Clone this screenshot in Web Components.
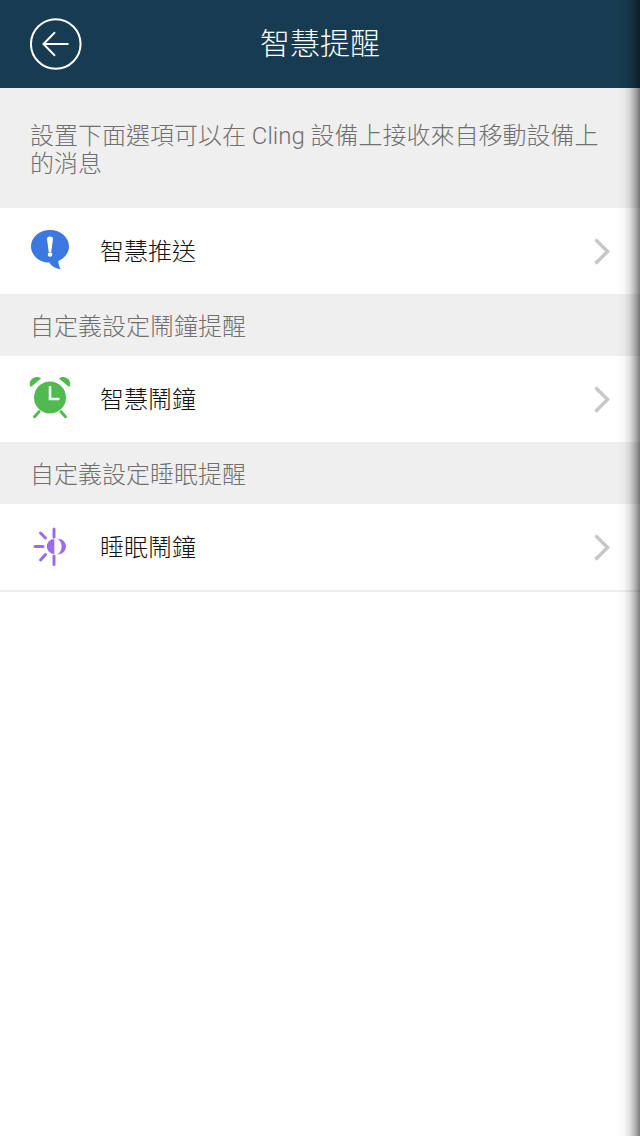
<!DOCTYPE html>
<html lang="zh-Hant">
<head>
<meta charset="utf-8">
<title>智慧提醒</title>
<style>
    html, body {
        margin: 0;
        padding: 0;
        height: 100%;
        background: #fff;
    }
    body {
        font-family: "Roboto", "Noto Sans CJK TC", sans-serif;
        font-weight: 300;
    }
</style>
</head>
<body>
<reminder-page>
    <app-header title-text="智慧提醒"></app-header>
    <info-note>設置下面選項可以在 Cling 設備上接收來自移動設備上的消息</info-note>
    <setting-row label="智慧推送">
        <svg slot="icon" width="40" height="42" viewBox="0 0 40 42">
            <path fill="#3b78e0" d="M20 0C30.500 0 39 7.300 39 16.300c0 6.500-4.400 12.100-10.700 14.700.2 3.300 1.100 6 2.500 8.300-4.600-.6-9-2.700-11.600-6.700C9.200 32.600 1 25.300 1 16.300 1 7.300 9.500 0 20 0z"/>
            <path fill="#fff" d="M17 8.800c0-1.400 1.300-2.300 3-2.300s3 .9 3 2.300L21.300 21.500c-.1.800-2.500.8-2.600 0z"/>
            <circle fill="#fff" cx="20" cy="24.500" r="2.300"/>
        </svg>
    </setting-row>
    <section-label>自定義設定鬧鐘提醒</section-label>
    <setting-row label="智慧鬧鐘">
        <svg slot="icon" width="42" height="42" viewBox="0 0 42 42">
            <circle fill="#50b94f" cx="21" cy="19.500" r="16"/>
            <path fill="#50b94f" d="M.8 7.500C0 3 3.500-1 8-1c1.500 0 3 .5 4 1.500L2.500 8.500c-.8.3-1.500 0-1.700-1zM41.200 7.500C42 3 38.500-1 34-1c-1.500 0-3 .5-4 1.500L39.500 8.500c.8.3 1.500 0 1.700-1z"/>
            <path fill="none" stroke="#50b94f" stroke-width="3" stroke-linecap="round" d="M10 33.700l-4.500 5M32 33.700l4.500 5"/>
            <path fill="none" stroke="#fff" stroke-width="2.600" d="M21 8V21H30.500"/>
        </svg>
    </setting-row>
    <section-label>自定義設定睡眠提醒</section-label>
    <setting-row label="睡眠鬧鐘" last>
        <svg slot="icon" width="42" height="42" viewBox="0 0 42 42">
            <path fill="none" stroke="#9a6bf0" stroke-width="3" stroke-linecap="round" d="M25 3v8M25 30v8.500M6 20.500h8M11.500 7l5 5M11.500 34l5-5.500"/>
            <path fill="#9a6bf0" d="M25.300 13v15a7.500 7.500 0 0 1 0-15z"/>
            <path fill="#9a6bf0" d="M28 12.500c5 0 9 3.600 9 8s-4 8-9 8c2.900-1.400 4.600-4.500 4.600-8s-1.700-6.600-4.600-8z"/>
        </svg>
    </setting-row>
</reminder-page>

<script>
class ReminderPage extends HTMLElement {
    constructor() {
        super();
        this.myRoot = this.attachShadow({ mode: "open" });
        this.myRoot.innerHTML = `
        <style>
            :host {
                display: block;
                position: relative;
                height: 1136px;
                overflow: hidden;
                background: #fff;
            }
            .edgeShadow {
                position: absolute;
                top: 0;
                right: 0;
                bottom: 0;
                width: 24px;
                background: linear-gradient(to right, rgba(0,0,0,0) 0%, rgba(0,0,0,.03) 35%, rgba(0,0,0,.12) 58%, rgba(0,0,0,.3) 80%, rgba(0,0,0,.52) 100%);
            }
        </style>
        <slot></slot>
        <div class="edgeShadow"></div>
        `;
    }
}

class AppHeader extends HTMLElement {
    constructor() {
        super();
        this.myRoot = this.attachShadow({ mode: "open" });
        this.myRoot.innerHTML = `
        <style>
            :host {
                display: flex;
                align-items: center;
                height: 88px;
                padding: 0 82px 0 30px;
                background: #173b50;
                color: #fff;
            }
            svg {
                flex: none;
                display: block;
            }
            h1 {
                margin: 0;
                flex: 1;
                text-align: center;
                font-size: 30px;
                line-height: 88px;
                font-weight: 300;
            }
        </style>
        <svg width="52" height="52" viewBox="0 0 52 52">
            <circle cx="25.750" cy="26" r="24.800" fill="none" stroke="#fff" stroke-width="2"/>
            <path d="M38.500 26H13.500M25 14.300 13.500 26 25 37.700" fill="none" stroke="#fff" stroke-width="2"/>
        </svg>
        <h1>${this.getAttribute("title-text")}</h1>
        `;
    }
}

class InfoNote extends HTMLElement {
    constructor() {
        super();
        this.myRoot = this.attachShadow({ mode: "open" });
        this.myRoot.innerHTML = `
        <style>
            :host {
                display: block;
                padding: 34px 30px 30px;
                background: #efefef;
                color: #707070;
                font-size: 24px;
                line-height: 28px;
            }
        </style>
        <slot></slot>
        `;
    }
}

class SectionLabel extends HTMLElement {
    constructor() {
        super();
        this.myRoot = this.attachShadow({ mode: "open" });
        this.myRoot.innerHTML = `
        <style>
            :host {
                display: block;
                height: 62px;
                padding-left: 30px;
                background: #efefef;
                color: #707070;
                font-size: 24px;
                line-height: 66px;
            }
        </style>
        <slot></slot>
        `;
    }
}

class SettingRow extends HTMLElement {
    constructor() {
        super();
        this.myRoot = this.attachShadow({ mode: "open" });
        this.myRoot.innerHTML = `
        <style>
            :host {
                display: flex;
                align-items: center;
                height: 86px;
                padding: 0 30px 0 29px;
                background: #fff;
                color: #111;
                font-size: 24px;
            }
            :host([last]) {
                border-bottom: 2px solid #eee;
            }
            .iconBox {
                flex: none;
                width: 42px;
                height: 42px;
                display: flex;
                align-items: center;
                justify-content: center;
                margin-right: 29px;
            }
            .label {
                flex: 1;
                padding-bottom: 3px;
            }
            svg {
                display: block;
            }
            ::slotted(svg) {
                overflow: visible;
            }
        </style>
        <div class="iconBox"><slot name="icon"></slot></div>
        <div class="label">${this.getAttribute("label")}</div>
        <svg width="17" height="27" viewBox="0 0 17 27">
            <path d="M2.500 1.500l12 12-12 12" fill="none" stroke="#c8c8cc" stroke-width="3.500"/>
        </svg>
        `;
    }
}

window.customElements.define("reminder-page", ReminderPage);
window.customElements.define("app-header", AppHeader);
window.customElements.define("info-note", InfoNote);
window.customElements.define("section-label", SectionLabel);
window.customElements.define("setting-row", SettingRow);
</script>
</body>
</html>
